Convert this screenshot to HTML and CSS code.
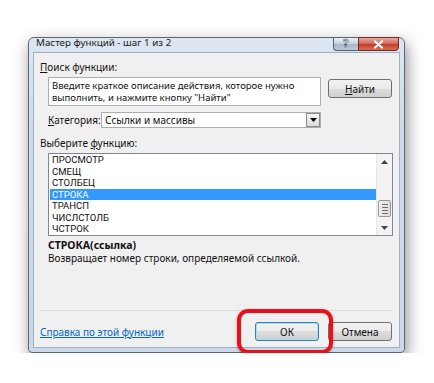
FILE: index.html
```html
<!DOCTYPE html>
<html lang="ru">
<head>
  <meta charset="UTF-8" />
  <title>Мастер функций</title>
  <link rel="stylesheet" href="styles.css">
</head>
<body>
  <div class="stage">
    <div class="window">
      <div class="titlebar">
        <span class="title">Мастер функций - шаг 1 из 2</span>
      </div>
      <div class="caption">
        <span class="cap help">?</span>
        <span class="cap close">
          <svg width="11" height="9" viewBox="0 0 11 9"><path d="M2 1.5 L9 7.5 M9 1.5 L2 7.5" stroke="#fff" stroke-width="2.2" stroke-linecap="round"/></svg>
        </span>
      </div>

      <div class="client">
        <div class="label"><u>П</u>оиск функции:</div>
        <div class="search-row">
          <div class="search-box">Введите краткое описание действия, которое нужно<br>выполнить, и нажмите кнопку "Найти"</div>
          <button class="btn"><u>Н</u>айти</button>
        </div>
        <div class="category-row">
          <span class="cat-label"><u>К</u>атегория:</span>
          <div class="select">
            <span class="select-value">Ссылки и массивы</span>
            <span class="drop">
              <svg width="7" height="4" viewBox="0 0 7 4"><path d="M0 0 H7 L3.5 4 Z" fill="#000"/></svg>
            </span>
          </div>
        </div>

        <div class="label list-label">Выберите <u>ф</u>ункцию:</div>
        <div class="listbox">
          <ul class="items">
            <li>ПРОСМОТР</li>
            <li>СМЕЩ</li>
            <li>СТОЛБЕЦ</li>
            <li class="selected">СТРОКА</li>
            <li>ТРАНСП</li>
            <li>ЧИСЛСТОЛБ</li>
            <li>ЧСТРОК</li>
          </ul>
          <div class="scrollbar">
            <span class="arrow">
              <svg width="7" height="4" viewBox="0 0 7 4"><path d="M0 4 H7 L3.5 0 Z" fill="#444"/></svg>
            </span>
            <div class="track">
              <div class="thumb"><i></i><i></i><i></i><i></i></div>
            </div>
            <span class="arrow">
              <svg width="7" height="4" viewBox="0 0 7 4"><path d="M0 0 H7 L3.5 4 Z" fill="#444"/></svg>
            </span>
          </div>
        </div>

        <div class="fn-sig">СТРОКА(ссылка)</div>
        <div class="fn-desc">Возвращает номер строки, определяемой ссылкой.</div>

        <div class="footer">
          <a class="help-link" href="#">Справка по этой функции</a>
          <div class="buttons">
            <button class="btn default">ОК</button>
            <button class="btn">Отмена</button>
          </div>
        </div>
      </div>
    </div>
  </div>
</body>
</html>
```

FILE: styles.css
```css
body {
  margin: 0;
  background: #fff;
  font-family: "Noto Sans", "Open Sans", sans-serif;
  font-size: 10px;
  color: #111;
}
.stage {
  padding: 37px 0 0 28px;
}
.window {
  position: relative;
  width: 377px;
  height: 316px;
  box-sizing: border-box;
  border: 1px solid #5f666e;
  border-radius: 6px 6px 4px 4px;
  background: linear-gradient(#dde7f2, #ccdbeb 30%, #c9d9ea);
  padding: 0 4px 4px 4px;
  display: flex;
  flex-direction: column;
  box-shadow: 2px 6px 16px rgba(0,0,0,0.45);
}
.titlebar {
  flex: 0 0 14px;
  display: flex;
  align-items: flex-start;
}
.title {
  font-size: 9.8px;
  line-height: 12px;
  margin: -1px 0 0 3px;
  color: #1a1a1a;
}
/* caption buttons sit over the top edge of the frame */
.caption {
  position: absolute;
  top: -1px;
  right: 5px;
  z-index: 2;
  display: flex;
}
.cap {
  height: 14px;
  box-sizing: border-box;
  display: flex;
  align-items: center;
  justify-content: center;
  border: 1px solid #56626f;
}
.help {
  width: 25px;
  border-radius: 0 0 0 4px;
  border-right: none;
  background-color: #b9c5d2;
  background-image: linear-gradient(#eef2f6, #c3cdd8 50%, #a9b6c5 55%, #bccad8);
  color: #e9eef3;
  -webkit-text-stroke: 0.6px #4f5a66;
  font-family: "DejaVu Sans", sans-serif;
  font-size: 10px;
  font-weight: bold;
  line-height: 12px;
}
.close {
  width: 41px;
  border-radius: 0 0 4px 0;
  border-color: #6e2a20;
  background-color: #c94a38;
  background-image: linear-gradient(#e9ad9f, #d46a5c 45%, #c13f2d 55%, #d27157);
}
.client {
  flex: 1;
  background: #f0f0f0;
  border: 1px solid #9eb0c5;
  display: flex;
  flex-direction: column;
  padding-top: 8px;
}
.label {
  line-height: 12px;
  padding-left: 6px;
}
.search-row {
  display: flex;
  margin: 4px 0 0 14px;
  align-items: flex-start;
}
.search-box {
  width: 273px;
  height: 29px;
  box-sizing: border-box;
  background: #fff;
  border: 1px solid #abadb3;
  padding: 2px 3px;
  line-height: 11.5px;
  font-size: 9.5px;
}
.btn {
  width: 64px;
  height: 19px;
  font-family: inherit;
  font-size: 10px;
  color: #111;
  border: 1px solid #707070;
  border-radius: 3px;
  background: linear-gradient(#f2f2f2, #ebebeb 50%, #dddddd 50%, #cfcfcf);
  padding: 0;
}
.search-row .btn {
  margin: 2px 0 0 7px;
}
.category-row {
  display: flex;
  align-items: center;
  margin: 6px 0 0 14px;
}
.cat-label {
  width: 53px;
}
.select {
  width: 220px;
  height: 16px;
  box-sizing: border-box;
  border: 1px solid #abadb3;
  background: #fff;
  display: flex;
  align-items: center;
  justify-content: space-between;
}
.select-value {
  padding-left: 3px;
}
.drop {
  width: 14px;
  height: 14px;
  box-sizing: border-box;
  border: 1px solid #8a8a8a;
  background: linear-gradient(#f4f4f4, #dcdcdc);
  display: flex;
  align-items: center;
  justify-content: center;
}
.list-label {
  margin-top: 9px;
}
.listbox {
  width: 345px;
  height: 83px;
  box-sizing: border-box;
  margin: 4px 0 0 14px;
  border: 1px solid #828790;
  background: #fff;
  display: flex;
}
.items {
  flex: 1;
  list-style: none;
  margin: 0;
  padding: 0 0 0 1px;
  font-family: Roboto, "Noto Sans", sans-serif;
  font-size: 9.5px;
}
.items li {
  line-height: 11.5px;
  padding-left: 2px;
}
.items li.selected {
  background: #3399ff;
  color: #fff;
}
.scrollbar {
  width: 15px;
  display: flex;
  flex-direction: column;
  background: #f3f3f3;
  border-left: 1px solid #e6e6e6;
}
.arrow {
  height: 15px;
  display: flex;
  align-items: center;
  justify-content: center;
}
.track {
  flex: 1;
  display: flex;
  flex-direction: column;
  justify-content: flex-end;
  padding-bottom: 3px;
}
.thumb {
  height: 17px;
  margin: 0 1px;
  box-sizing: border-box;
  border: 1px solid #979797;
  border-radius: 2px;
  background: linear-gradient(90deg, #f1f1f1, #dedede);
  display: flex;
  flex-direction: column;
  justify-content: center;
  align-items: center;
  gap: 2px;
}
.thumb i {
  width: 6px;
  height: 1px;
  background: #6d6d6d;
}
.fn-sig {
  margin: 3px 0 0 14px;
  font-weight: bold;
  font-size: 10.5px;
  line-height: 12px;
}
.fn-desc {
  margin: 1px 0 0 14px;
  line-height: 12px;
}
.footer {
  margin: auto 7px 0 6px;
  border-top: 1px solid #dcdcdc;
  padding: 11px 0 6px 0;
  display: flex;
  justify-content: space-between;
  align-items: center;
}
.help-link {
  color: #0066cc;
  text-decoration: underline;
}
.buttons {
  display: flex;
  gap: 9px;
}
.btn.default {
  position: relative;
  border-color: #3c7fb1;
  box-shadow: inset 0 0 0 1px #a8def8;
}
.btn.default::after {
  content: "";
  position: absolute;
  left: -19px;
  right: -15px;
  top: -14px;
  bottom: -14px;
  border: 4px solid #e8101a;
  border-radius: 11px;
  box-shadow: 0 1px 3px rgba(0,0,0,0.35);
}
```
